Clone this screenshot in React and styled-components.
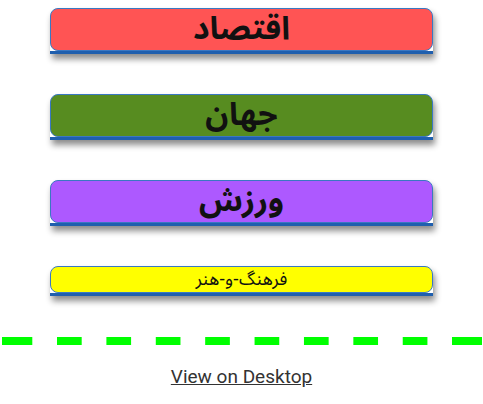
import React from "react";
import styled, { createGlobalStyle } from "styled-components";

const GlobalStyle = createGlobalStyle`
  html, body {
    margin: 0;
    padding: 0;
    background: #ffffff;
  }
  body {
    font-family: "Noto Sans Arabic", "DejaVu Sans", sans-serif;
  }
`;

const Page = styled.div`
  width: 100%;
  padding-top: 8px;
  display: flex;
  flex-direction: column;
  align-items: stretch;
`;

const Menu = styled.nav`
  display: flex;
  flex-direction: column;
  gap: 40px;
  padding: 0 50px;
`;

const Item = styled.a`
  display: block;
  text-decoration: none;
  border-bottom: 3px solid #1f5fae;
  box-shadow: 2px 5px 6px rgba(0, 0, 0, 0.45);
  border-radius: 8px 8px 0 0;
`;

const Label = styled.div`
  height: ${({ $small }) => ($small ? "25px" : "41px")};
  background: ${({ $bg }) => $bg};
  border: 1px solid #3a78c2;
  border-radius: 8px;
  display: flex;
  align-items: center;
  justify-content: center;
  direction: rtl;
  color: #111;
  font-size: ${({ $small }) => ($small ? "18px" : "32px")};
  font-weight: ${({ $small }) => ($small ? "normal" : "bold")};
  line-height: 1.15;
`;

const Divider = styled.div`
  height: 8px;
  margin-top: 41px;
  background:
    linear-gradient(#00ff00, #00ff00) 2px 0 / 30px 100% no-repeat,
    linear-gradient(#00ff00, #00ff00) 452px 0 / 30px 100% no-repeat,
    linear-gradient(to right, #00ff00 0 24.6px, transparent 24.6px) 57px 0 / 49.4px 100% repeat-x;
`;

const Footer = styled.div`
  display: flex;
  justify-content: center;
  padding-top: 20px;
`;

const DesktopLink = styled.a`
  font-family: Roboto, "Liberation Sans", sans-serif;
  font-size: 19px;
  color: #333;
  text-decoration: underline;
`;

const items = [
  { title: "اقتصاد", bg: "#ff5454" },
  { title: "جهان", bg: "#578c20" },
  { title: "ورزش", bg: "#ad59ff" },
  { title: "فرهنگ-و-هنر", bg: "#ffff00", small: true },
];

export default function App() {
  return (
    <>
      <GlobalStyle />
      <Page>
        <Menu>
          {items.map((item) => (
            <Item key={item.title} href="#">
              <Label $bg={item.bg} $small={item.small}>
                {item.title}
              </Label>
            </Item>
          ))}
        </Menu>
        <Divider />
        <Footer>
          <DesktopLink href="#">View on Desktop</DesktopLink>
        </Footer>
      </Page>
    </>
  );
}
